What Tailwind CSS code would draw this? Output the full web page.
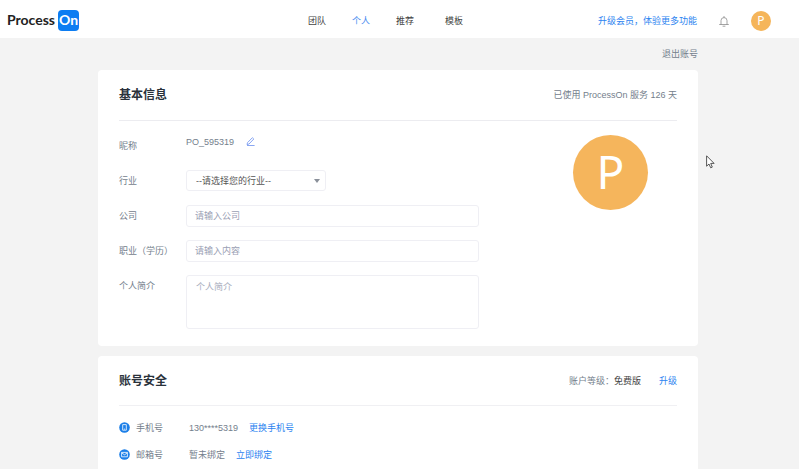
<!DOCTYPE html>
<html lang="zh-CN">
<head>
    <meta charset="UTF-8">
    <meta name="viewport" content="width=device-width, initial-scale=1.0">
    <title>ProcessOn - 个人中心</title>
    <script src="https://cdn.jsdelivr.net/npm/@tailwindcss/browser@4"></script>
</head>
<body class="relative min-h-screen flex flex-col bg-[#f3f3f3] font-['Liberation_Sans','Noto_Sans_CJK_SC',sans-serif] text-[9px] leading-[14px] text-[#74808c]">
    <header class="flex items-center h-[38px] pl-[7px] pr-7 bg-white text-[#444]">
        <a href="#" class="flex items-center justify-between w-[72px] pt-[2px] font-['Lato',sans-serif] text-[14px] font-bold text-[#222]">
            Process
            <span class="flex items-center justify-center w-[21px] h-[21px] rounded bg-[#0d7df2] text-white">On</span>
        </a>
        <nav class="flex gap-[26px] ml-[229px] mt-1">
            <a href="#">团队</a>
            <a href="#" class="text-[#4a8cf0]">个人</a>
            <a href="#">推荐</a>
            <a href="#" class="ml-[5px]">模板</a>
        </nav>
        <div class="flex items-center ml-auto mt-1">
            <a href="#" class="text-[#2b83f0]">升级会员，体验更多功能</a>
            <button type="button" aria-label="通知" class="ml-[22px]">
                <svg class="w-[10px] h-[11px]" viewBox="0 0 10 11" fill="none" stroke="#8d8d8d" stroke-width="0.8">
                    <path d="M5 .4v1M2 8.4V4.6a3 3 0 0 1 6 0v3.8M.6 8.5h8.8M4 10.2h2" stroke-linecap="round"/>
                </svg>
            </button>
            <button type="button" class="w-5 h-5 ml-[22px] rounded-full bg-[#f5b55a] font-['Noto_Sans',sans-serif] text-[12px] text-white">P</button>
        </div>
    </header>

    <div class="flex-1 flex flex-col pr-[3px]">
        <main class="flex-1 flex flex-col w-full max-w-[600px] mx-auto">
            <div class="flex items-center justify-end h-8">
                <a href="#">退出账号</a>
            </div>

            <section class="px-[21px] pb-[17px] rounded bg-white">
                <div class="flex items-center justify-between h-[51px] border-b border-[#ececf0]">
                    <h2 class="text-[12px] font-bold text-[#2a323b]">基本信息</h2>
                    <p>已使用 ProcessOn 服务 126 天</p>
                </div>
                <div class="flex items-start justify-between pt-[14px]">
                    <form class="flex-1 max-w-[360px] grid grid-cols-[67px_1fr] gap-y-[13px]">
                        <span class="leading-[22px]">昵称</span>
                        <div class="flex items-start gap-3">
                            <span>PO_595319</span>
                            <button type="button" aria-label="修改昵称" class="mt-[2px]">
                                <svg class="w-[9px] h-[9px]" viewBox="0 0 9 9" fill="none" stroke="#7d9df0" stroke-width="0.9" stroke-linejoin="round">
                                    <path d="M6.4.7 7.8 2 3 7 1 7.6l.5-2zM1 8.5h7.6"/>
                                </svg>
                            </button>
                        </div>

                        <label for="industry" class="leading-[22px]">行业</label>
                        <div class="relative w-[140px]">
                            <select id="industry" class="appearance-none w-full h-[21px] pl-[9px] pr-5 rounded-[3px] border border-[#efeff4] bg-white text-[#555]">
                                <option>--请选择您的行业--</option>
                            </select>
                            <svg class="absolute right-[6px] top-[9px] w-[6px] h-1 pointer-events-none" viewBox="0 0 6 4" fill="#8a909a"><path d="M0 0h6L3 4z"/></svg>
                        </div>

                        <label for="company" class="leading-[22px]">公司</label>
                        <input id="company" type="text" placeholder="请输入公司" class="w-full h-[22px] px-2 rounded-[3px] border border-[#efeff4] placeholder:text-[#9aa0b4]">

                        <label for="job" class="leading-[22px]">职业（学历）</label>
                        <input id="job" type="text" placeholder="请输入内容" class="w-full h-[22px] px-2 rounded-[3px] border border-[#efeff4] placeholder:text-[#9aa0b4]">

                        <label for="intro" class="leading-[22px]">个人简介</label>
                        <textarea id="intro" placeholder="个人简介" class="w-full h-[54px] px-[9px] py-1 rounded-[3px] border border-[#efeff4] resize-none placeholder:text-[#a8adbd]"></textarea>
                    </form>
                    <div class="flex items-center justify-center w-[75px] h-[75px] mr-[29px] pb-1 rounded-full bg-[#f5b55c] font-['Noto_Sans',sans-serif] text-[46px] text-white">P</div>
                </div>
            </section>

            <section class="flex-1 mt-[10px] px-[21px] rounded-t bg-white">
                <div class="flex items-center justify-between h-[50px] border-b border-[#f0f0f3]">
                    <h2 class="text-[12px] font-bold text-[#2a323b]">账号安全</h2>
                    <p class="flex">账户等级：<span class="text-[#444]">免费版</span><a href="#" class="ml-[18px] text-[#2b83f0]">升级</a></p>
                </div>
                <ul class="pt-2">
                    <li class="flex items-center h-[27px]">
                        <svg class="w-[11px] h-[11px]" viewBox="0 0 11 11">
                            <circle cx="5.5" cy="5.5" r="5.3" fill="#1c7fe8"/>
                            <path d="M3.7 2.6h3.6v5.6H3.7zM5 7.1h1" fill="none" stroke="#fff" stroke-width="0.8"/>
                        </svg>
                        <span class="w-[53px] ml-[6px]">手机号</span>
                        <span>130****5319</span>
                        <a href="#" class="ml-[11px] text-[#2b83f0]">更换手机号</a>
                    </li>
                    <li class="flex items-center h-[27px]">
                        <svg class="w-[11px] h-[11px]" viewBox="0 0 11 11">
                            <circle cx="5.5" cy="5.5" r="5.3" fill="#1c7fe8"/>
                            <path d="M2.6 3.4h5.8v4.4H2.6zM2.6 3.8l2.9 2 2.9-2" fill="none" stroke="#fff" stroke-width="0.8"/>
                        </svg>
                        <span class="w-[53px] ml-[6px]">邮箱号</span>
                        <span>暂未绑定</span>
                        <a href="#" class="ml-[11px] text-[#2b83f0]">立即绑定</a>
                    </li>
                </ul>
            </section>
        </main>
    </div>

    <!-- mouse pointer -->
    <svg class="absolute left-[706px] top-[155px] w-[9px] h-[14px]" viewBox="0 0 9 14">
        <path d="M.6.8v10.4l2.4-2.2 1.7 3.8 1.6-.7-1.6-3.7h3.4z" fill="#fff" stroke="#444" stroke-width="0.9"/>
    </svg>
</body>
</html>
